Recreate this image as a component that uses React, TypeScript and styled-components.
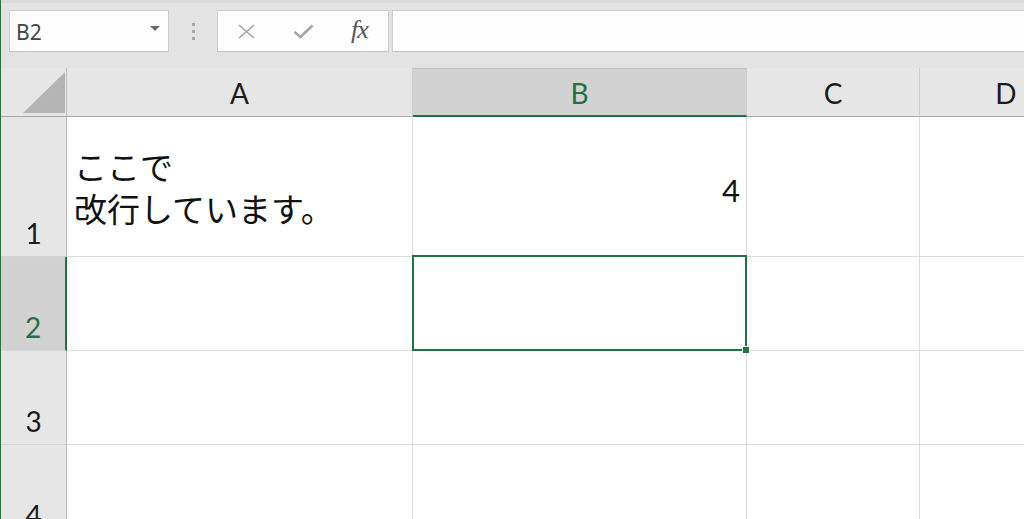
import React from "react";
import styled, { createGlobalStyle, css } from "styled-components";

const GREEN = "#217346";

const columns = ["A", "B", "C", "D"];
const rows = [1, 2, 3, 4];

const GlobalStyle = createGlobalStyle`
  html, body {
    margin: 0;
    padding: 0;
    background: #e3e3e3;
    overflow: hidden;
  }
`;

const App = () => {
  return (
    <>
      <GlobalStyle />
      <Window>
        <FormulaBar>
          <NameBox>
            <NameText>B2</NameText>
            <DropArrow />
          </NameBox>
          <Grip>
            <Dot />
            <Dot />
            <Dot />
          </Grip>
          <FxButtons>
            <IconButton>
              <svg width="19" height="15" viewBox="0 0 19 15">
                <path d="M2 1 L17 14 M17 1 L2 14" stroke="#a6a6a6" strokeWidth="1.6" fill="none" />
              </svg>
            </IconButton>
            <IconButton>
              <svg width="21" height="15" viewBox="0 0 21 15">
                <path d="M1.5 8 L7.5 13 L19.5 1.5" stroke="#a6a6a6" strokeWidth="2.6" fill="none" />
              </svg>
            </IconButton>
            <FxLabel>fx</FxLabel>
          </FxButtons>
          <FormulaInput />
        </FormulaBar>

        <Sheet>
          <Corner>
            <CornerTriangle />
          </Corner>
          {columns.map((c) => (
            <ColHeader key={c} $selected={c === "B"}>
              {c}
            </ColHeader>
          ))}
          {rows.map((r) => (
            <React.Fragment key={r}>
              <RowHeader $selected={r === 2}>
                <RowNumber>{r}</RowNumber>
              </RowHeader>
              {columns.map((c) => {
                const active = r === 2 && c === "B";
                return (
                  <Cell key={c} $active={active} $align={c === "B" ? "right" : "left"}>
                    {r === 1 && c === "A" && (
                      <WrapText>
                        <TextLine>ここで</TextLine>
                        <TextLine>改行しています。</TextLine>
                      </WrapText>
                    )}
                    {r === 1 && c === "B" && <NumberText>4</NumberText>}
                    {active && <FillHandle />}
                  </Cell>
                );
              })}
            </React.Fragment>
          ))}
        </Sheet>
      </Window>
    </>
  );
};

const Window = styled.div`
  height: 100vh;
  width: 100vw;
  display: flex;
  flex-direction: column;
  border-left: 1px solid ${GREEN};
  box-sizing: border-box;
  overflow: hidden;
`;

const FormulaBar = styled.div`
  height: 68px;
  flex-shrink: 0;
  box-sizing: border-box;
  border-top: 3px solid #dadada;
  padding: 7px 0 0 8px;
  display: flex;
  align-items: flex-start;
  background: #e3e3e3;
`;

const boxStyle = css`
  height: 42px;
  box-sizing: border-box;
  background: #fdfdfd;
  border: 1px solid #cdcdcd;
  border-bottom-color: #c2c2c2;
`;

const NameBox = styled.div`
  ${boxStyle};
  width: 160px;
  display: flex;
  align-items: center;
  justify-content: space-between;
  padding: 0 8px 0 6px;
`;

const NameText = styled.span`
  font-family: "Noto Sans", "Open Sans", sans-serif;
  font-size: 21px;
  color: #444;
  padding-top: 2px;
`;

const DropArrow = styled.span`
  width: 0;
  height: 0;
  border-left: 5.5px solid transparent;
  border-right: 5.5px solid transparent;
  border-top: 5px solid #6a6a6a;
  margin-bottom: 6px;
`;

const Grip = styled.div`
  width: 48px;
  height: 42px;
  display: flex;
  flex-direction: column;
  align-items: center;
  justify-content: center;
  gap: 4px;
`;

const Dot = styled.span`
  width: 3px;
  height: 3px;
  background: #a8a8a8;
`;

const FxButtons = styled.div`
  ${boxStyle};
  width: 172px;
  display: flex;
  align-items: center;
  padding-left: 19px;
`;

const IconButton = styled.div`
  width: 56px;
  display: flex;
  align-items: center;
`;

const FxLabel = styled.span`
  font-family: "Liberation Serif", "DejaVu Serif", serif;
  font-style: italic;
  font-size: 26px;
  color: #555;
  letter-spacing: -1px;
  margin-left: 2px;
  padding-bottom: 3px;
`;

const FormulaInput = styled.div`
  ${boxStyle};
  flex: 1;
  margin-left: 3px;
  border-right: none;
`;

const Sheet = styled.div`
  flex: 1;
  display: grid;
  grid-template-columns: 66px 346px 334px 173px 173px;
  grid-template-rows: 49px 140px 94px 94px 94px;
  background: #fff;
  overflow: hidden;
`;

const headerBase = css`
  box-sizing: border-box;
  background: #e6e6e6;
  font-family: Lato, "Liberation Sans", sans-serif;
  font-size: 28px;
  color: #1b1b1b;
`;

const Corner = styled.div`
  ${headerBase};
  position: relative;
  border-right: 1px solid #bdbdbd;
  border-bottom: 1px solid #a8a8a8;
`;

const CornerTriangle = styled.div`
  position: absolute;
  right: 1px;
  bottom: 3px;
  width: 0;
  height: 0;
  border-left: 42px solid transparent;
  border-bottom: 41px solid #b4b4b4;
`;

const ColHeader = styled.div<{ $selected?: boolean }>`
  ${headerBase};
  display: flex;
  align-items: center;
  justify-content: center;
  border-right: 1px solid #cdcdcd;
  border-bottom: 1px solid #a8a8a8;
  padding-top: 2px;
  ${(p) =>
    p.$selected &&
    css`
      background: #d2d2d2;
      color: ${GREEN};
      border-bottom: 2px solid ${GREEN};
      border-top: 1px solid #c4c4c4;
    `}
`;

const RowHeader = styled.div<{ $selected?: boolean }>`
  ${headerBase};
  display: flex;
  align-items: flex-end;
  justify-content: center;
  border-right: 1px solid #b9b9b9;
  border-bottom: 1px solid #d4d4d4;
  padding-bottom: 9px;
  ${(p) =>
    p.$selected &&
    css`
      background: #d2d2d2;
      color: ${GREEN};
      border-right: 2px solid ${GREEN};
    `}
`;

const RowNumber = styled.span`
  line-height: 1;
`;

const Cell = styled.div<{ $active?: boolean; $align: "left" | "right" }>`
  box-sizing: border-box;
  position: relative;
  border-right: 1px solid #dcdcdc;
  border-bottom: 1px solid #dcdcdc;
  display: flex;
  align-items: center;
  justify-content: ${(p) => (p.$align === "right" ? "flex-end" : "flex-start")};
  padding: 0 6px 0 8px;
  ${(p) =>
    p.$active &&
    css`
      &::after {
        content: "";
        position: absolute;
        top: -2px;
        left: -1px;
        right: -1px;
        bottom: -1px;
        border: 2px solid ${GREEN};
        pointer-events: none;
      }
    `}
`;

const FillHandle = styled.span`
  position: absolute;
  right: -3px;
  bottom: -3px;
  width: 6px;
  height: 6px;
  background: ${GREEN};
  border: 1px solid #fff;
  border-right: none;
  border-bottom: none;
  z-index: 2;
`;

const WrapText = styled.div`
  display: flex;
  flex-direction: column;
  gap: 2px;
  font-family: "Noto Sans CJK JP", "Noto Sans", sans-serif;
  font-size: 33px;
  color: #111;
  margin-left: -1px;
`;

const TextLine = styled.span`
  line-height: 40px;
  white-space: nowrap;
`;

const NumberText = styled.span`
  font-family: Lato, "Liberation Sans", sans-serif;
  font-size: 31px;
  color: #111;
  padding-top: 6px;
`;

export default App;
